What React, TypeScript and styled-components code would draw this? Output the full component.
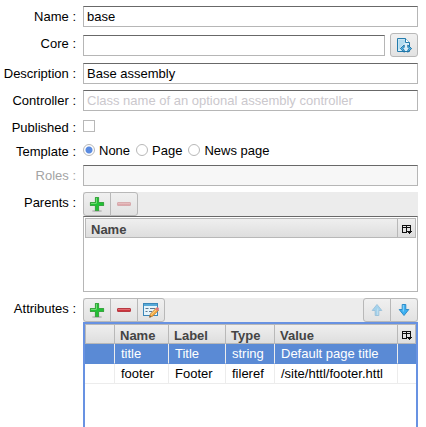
import React, { useState } from "react";
import styled, { createGlobalStyle, css } from "styled-components";

const GlobalStyle = createGlobalStyle`
  * { box-sizing: border-box; }
  body {
    margin: 0;
    background: #fff;
    color: #000;
    font: 13px/15px "Liberation Sans", Arial, sans-serif;
    overflow: hidden;
  }
  button, input, table { font: inherit; color: inherit; }
`;

const Form = styled.form`
  display: grid;
  grid-template-columns: 76px 1fr;
  grid-template-rows: repeat(8, auto) 1fr;
  gap: 6px 7px;
  height: 100vh;
  padding: 6px 8px 0 0;
`;

const labelStyle = css`
  padding-top: 3px;
  text-align: right;
  white-space: nowrap;
`;

const Label = styled.label<{ $muted?: boolean }>`
  ${labelStyle}
  color: ${(p) => (p.$muted ? "#a4a4a4" : "#000")};
`;

const Caption = styled.span`
  ${labelStyle}
`;

const TextField = styled.input`
  display: block;
  width: 100%;
  min-width: 0;
  height: 21px;
  padding: 0 3px;
  border: 1px solid #b6b6b6;
  border-top-color: #686868;
  border-radius: 0;
  background: #fff;
  outline: none;
  &::placeholder { color: #cbc8cd; opacity: 1; }
  &:disabled { background: #f7f7f7; }
`;

const FieldWithButton = styled.div`
  display: flex;
  align-items: center;
  gap: 5px;
`;

const buttonFace = css`
  display: flex;
  align-items: center;
  justify-content: center;
  flex: none;
  width: 28px;
  height: 24px;
  padding: 0;
  border: 1px solid #b8b8b8;
  background: linear-gradient(#f0f0f0, #e2e2e2);
`;

const IconButton = styled.button`
  ${buttonFace}
  border-radius: 3px;
`;

const ChoiceLine = styled.div`
  display: flex;
  align-items: center;
  gap: 6px;
  height: 18px;
`;

const Choice = styled.label`
  display: flex;
  align-items: center;
  gap: 4px;
`;

const CheckBox = styled.input`
  appearance: none;
  width: 12px;
  height: 12px;
  margin: 0;
  border: 1px solid #b8b8b8;
  background: #fff;
  &:checked { background: #5b8ade; box-shadow: inset 0 0 0 2px #fff; }
`;

const Radio = styled.input`
  appearance: none;
  width: 12px;
  height: 12px;
  margin: 0;
  border: 1px solid #b8b8b8;
  border-radius: 50%;
  background: #fff;
  &:checked { background: radial-gradient(circle, #5b8be0 0 3px, #fff 4px); }
`;

const Panel = styled.div`
  display: flex;
  flex-direction: column;
  min-width: 0;
`;

const Toolbar = styled.div`
  display: flex;
  justify-content: space-between;
  height: 24px;
  background: #ececec;
`;

const ButtonGroup = styled.div`
  display: flex;
`;

const ToolButton = styled.button`
  ${buttonFace}
  & + & { margin-left: -1px; }
  &:first-child { border-radius: 3px 0 0 3px; }
  &:last-child { border-radius: 0 3px 3px 0; }
`;

const ListBox = styled.div<{ $focused?: boolean }>`
  ${(p) =>
    p.$focused
      ? css`
          flex: 1;
          border: 2px solid #6892e2;
          border-bottom: 0;
        `
      : css`
          height: 76px;
          padding: 1px;
          border: 1px solid #b6b6b6;
          border-top-color: #686868;
        `}
`;

const Grid = styled.table`
  width: 100%;
  table-layout: fixed;
  border-collapse: separate;
  border-spacing: 0;
`;

const Column = styled.col<{ $width?: number }>`
  width: ${(p) => (p.$width ? `${p.$width}px` : "auto")};
`;

const HeadCell = styled.th`
  height: 20px;
  padding: 2px 0 0 5px;
  border: solid #b8b8b8;
  border-width: 1px 1px 1px 0;
  background: linear-gradient(#efefef, #dedede);
  color: #444;
  font-weight: bold;
  text-align: left;
  white-space: nowrap;
  &:first-child { border-left-width: 1px; }
`;

const MenuCell = styled(HeadCell)`
  padding: 0;
`;

const MenuButton = styled.button`
  display: flex;
  align-items: center;
  justify-content: center;
  width: 100%;
  height: 18px;
  padding: 2px 0 0;
  border: 0;
  background: none;
`;

const Cell = styled.td`
  height: 20px;
  padding: 0 0 1px 6px;
  border: solid #ececec;
  border-width: 0 1px 1px 0;
  white-space: nowrap;
  &:last-child { border-right-width: 0; }
`;

const Row = styled.tr<{ $selected: boolean }>`
  ${(p) =>
    p.$selected &&
    css`
      color: #fff;
      ${Cell} { background: #5a8ad5; border-bottom-color: #5a8ad5; }
    `}
`;

const Svg = ({ children }: { children: React.ReactNode }) => (
  <svg width="16" height="16" viewBox="0 0 16 16" aria-hidden="true">{children}</svg>
);

const PlusIcon = () => (
  <Svg>
    <ellipse cx="8" cy="15" rx="5" ry="0.9" fill="#000" opacity="0.2" />
    <path d="M6.5 1.5h3v5h5v3h-5v5h-3v-5h-5v-3h5z" fill="#1fc235" stroke="#3aa640" strokeWidth="1.2" strokeLinejoin="round" />
    <path d="M7.5 2v5.5M2 7.5h5" stroke="#6fdc72" fill="none" />
  </Svg>
);

const MinusIcon = ({ faded }: { faded?: boolean }) => (
  <Svg>
    <g opacity={faded ? 0.35 : 1}>
      <rect x="1.5" y="6.5" width="13" height="3" rx="0.5" fill="#cd343d" stroke="#b83a42" />
      <path d="M2 7.5h12" stroke="#e06a70" />
    </g>
  </Svg>
);

const EditIcon = () => (
  <Svg>
    <rect x="0.5" y="1.5" width="14" height="12" fill="#e6f4fb" stroke="#3c87b8" />
    <path d="M1 3h13" stroke="#56a9d7" strokeWidth="2" />
    <path d="M2.5 6.5h3M7 6.5h5M2.5 9.5h2M6 9.5h3" stroke="#5c7890" />
    <path d="M6.6 15.2l.8-3.2 6-6 2.2 2.2-6 6z" fill="#f6ac45" stroke="#b6772c" strokeWidth="0.8" />
    <path d="M8 12.8l5.6-5.6" stroke="#ffe09a" strokeWidth="0.8" />
    <path d="M12.5 7l1.4-1.4a.9.9 0 0 1 1.3 0l.5.6a.9.9 0 0 1 0 1.3L14.5 9z" fill="#df7480" />
    <path d="M6.5 15.4l.4-1.5 1.1 1.1z" fill="#333" />
  </Svg>
);

const ArrowIcon = ({ up }: { up?: boolean }) => (
  <Svg>
    <g transform={up ? "rotate(180 8 8)" : undefined} opacity={up ? 0.4 : 1}>
      <path d="M6.2 2.5h3.6v5h3L8 13.5 3.2 7.5h3z" fill="#3cb0f2" stroke="#2f8cc8" strokeLinejoin="round" />
      <path d="M7.3 3v6.5" stroke="#8ed7fb" />
    </g>
  </Svg>
);

const CodeFileIcon = () => (
  <Svg>
    <path d="M1.5 1.5h8l4 4v9h-12z" fill="#dbeff9" stroke="#247cac" />
    <path d="M2.5 13l7-8v-2.5h-7z" fill="#b4dcef" />
    <path d="M9.5 1.5v4h4" fill="#fff" stroke="#247cac" />
    <path d="M8.2 8L4.4 11.6l3.8 3.7v-2.2l-1.3-1.5 1.3-1.4zM11.8 8l3.8 3.6-3.8 3.7v-2.2l1.3-1.5-1.3-1.4z" fill="#56b9e9" stroke="#17699c" strokeWidth="0.9" />
  </Svg>
);

const ColumnMenuIcon = () => (
  <svg width="10" height="9" viewBox="0 0 10 9" aria-hidden="true" shapeRendering="crispEdges">
    <path d="M0.5 7.5v-7h8v5M0 2.5h9M4.5 0v8M0 7.5h5" fill="none" stroke="#111" />
    <path d="M5 6h5v1H9v1H8v1H7V8H6V7H5z" fill="#111" />
  </svg>
);

const ColumnMenu = () => (
  <MenuCell scope="col">
    <MenuButton type="button" aria-label="Choose columns"><ColumnMenuIcon /></MenuButton>
  </MenuCell>
);

const templates = ["None", "Page", "News page"];

const attributes = [
  { name: "title", label: "Title", type: "string", value: "Default page title" },
  { name: "footer", label: "Footer", type: "fileref", value: "/site/httl/footer.httl" },
];

export default function App() {
  const [template, setTemplate] = useState("None");
  const [selected, setSelected] = useState("title");

  return (
    <>
      <GlobalStyle />
      <Form onSubmit={(e) => e.preventDefault()}>
        <Label htmlFor="name">Name :</Label>
        <TextField id="name" defaultValue="base" />

        <Label htmlFor="core">Core :</Label>
        <FieldWithButton>
          <TextField id="core" />
          <IconButton type="button" aria-label="Select core file"><CodeFileIcon /></IconButton>
        </FieldWithButton>

        <Label htmlFor="description">Description :</Label>
        <TextField id="description" defaultValue="Base assembly" />

        <Label htmlFor="controller">Controller :</Label>
        <TextField id="controller" placeholder="Class name of an optional assembly controller" />

        <Label htmlFor="published">Published :</Label>
        <ChoiceLine>
          <CheckBox id="published" type="checkbox" />
        </ChoiceLine>

        <Caption id="template-caption">Template :</Caption>
        <ChoiceLine role="radiogroup" aria-labelledby="template-caption">
          {templates.map((t) => (
            <Choice key={t}>
              <Radio type="radio" name="template" checked={template === t} onChange={() => setTemplate(t)} />
              {t}
            </Choice>
          ))}
        </ChoiceLine>

        <Label htmlFor="roles" $muted>Roles :</Label>
        <TextField id="roles" disabled />

        <Caption id="parents-caption">Parents :</Caption>
        <Panel>
          <Toolbar>
            <ButtonGroup>
              <ToolButton type="button" aria-label="Add parent"><PlusIcon /></ToolButton>
              <ToolButton type="button" aria-label="Remove parent" disabled><MinusIcon faded /></ToolButton>
            </ButtonGroup>
          </Toolbar>
          <ListBox>
            <Grid aria-labelledby="parents-caption">
              <colgroup>
                <Column />
                <Column $width={18} />
              </colgroup>
              <thead>
                <tr>
                  <HeadCell scope="col">Name</HeadCell>
                  <ColumnMenu />
                </tr>
              </thead>
            </Grid>
          </ListBox>
        </Panel>

        <Caption id="attributes-caption">Attributes :</Caption>
        <Panel>
          <Toolbar>
            <ButtonGroup>
              <ToolButton type="button" aria-label="Add attribute"><PlusIcon /></ToolButton>
              <ToolButton type="button" aria-label="Remove attribute"><MinusIcon /></ToolButton>
              <ToolButton type="button" aria-label="Edit attribute"><EditIcon /></ToolButton>
            </ButtonGroup>
            <ButtonGroup>
              <ToolButton type="button" aria-label="Move up" disabled><ArrowIcon up /></ToolButton>
              <ToolButton type="button" aria-label="Move down"><ArrowIcon /></ToolButton>
            </ButtonGroup>
          </Toolbar>
          <ListBox $focused>
            <Grid aria-labelledby="attributes-caption">
              <colgroup>
                <Column $width={30} />
                <Column $width={54} />
                <Column $width={57} />
                <Column $width={49} />
                <Column />
                <Column $width={18} />
              </colgroup>
              <thead>
                <tr>
                  <HeadCell />
                  <HeadCell scope="col">Name</HeadCell>
                  <HeadCell scope="col">Label</HeadCell>
                  <HeadCell scope="col">Type</HeadCell>
                  <HeadCell scope="col">Value</HeadCell>
                  <ColumnMenu />
                </tr>
              </thead>
              <tbody>
                {attributes.map((a) => (
                  <Row key={a.name} $selected={a.name === selected} onClick={() => setSelected(a.name)}>
                    <Cell />
                    <Cell>{a.name}</Cell>
                    <Cell>{a.label}</Cell>
                    <Cell>{a.type}</Cell>
                    <Cell>{a.value}</Cell>
                    <Cell />
                  </Row>
                ))}
              </tbody>
            </Grid>
          </ListBox>
        </Panel>
      </Form>
    </>
  );
}
